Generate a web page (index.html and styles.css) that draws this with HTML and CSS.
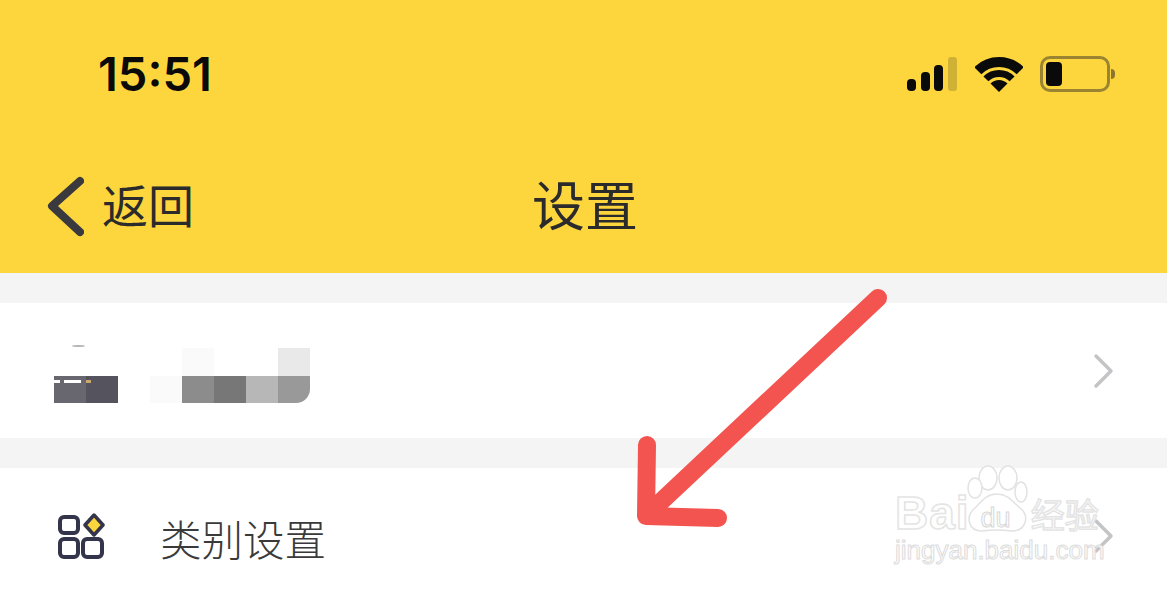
FILE: index.html
```html
<!DOCTYPE html>
<html lang="zh-CN">
<head>
  <meta charset="UTF-8" />
  <meta name="viewport" content="width=device-width, initial-scale=1.0">
  <title>设置</title>
  <link rel="stylesheet" href="styles.css">
</head>
<body>
  <div class="header">
    <div class="status-bar">
      <div class="time">15:51</div>
      <div class="status-icons">
        <svg class="signal" width="52" height="36" viewBox="0 0 52 36">
          <rect x="1" y="23" width="9" height="12" rx="4" fill="#0a0a0a"/>
          <rect x="15" y="16" width="9" height="19" rx="4" fill="#0a0a0a"/>
          <rect x="28" y="9" width="9" height="26" rx="4" fill="#0a0a0a"/>
          <rect x="42" y="1" width="9" height="34" rx="3" fill="#cfb136"/>
        </svg>
        <svg class="wifi" width="48" height="36" viewBox="0 0 48 36">
          <path d="M2.8 14.8 A30 30 0 0 1 45.2 14.8" fill="none" stroke="#0a0a0a" stroke-width="10"/>
          <path d="M10.9 22.9 A18.5 18.5 0 0 1 37.1 22.9" fill="none" stroke="#0a0a0a" stroke-width="7"/>
          <path d="M24 36 L15.5 27.5 A12 12 0 0 1 32.5 27.5 Z" fill="#0a0a0a"/>
        </svg>
        <div class="battery">
          <div class="battery-body"><div class="battery-level"></div></div>
          <div class="battery-cap"></div>
        </div>
      </div>
    </div>
    <div class="nav-bar">
      <a class="back" href="#">
        <svg class="back-icon" width="38" height="62" viewBox="0 0 38 62">
          <path d="M34 6 L6 31 L34 57" fill="none" stroke="#3a3a3e" stroke-width="8" stroke-linecap="round" stroke-linejoin="round"/>
        </svg>
        <span>返回</span>
      </a>
      <div class="title">设置</div>
      <div></div>
    </div>
  </div>

  <div class="content">
    <div class="row account-row">
      <div class="mosaic">
        <div class="sliver"></div>
        <div class="cell"></div><div class="cell"></div><div class="cell"></div><div class="cell"></div>
        <div class="cell c-faint"></div><div class="cell"></div><div class="cell"></div><div class="cell c-light"></div>
        <div class="cell c-dark1"></div><div class="cell c-dark2"></div><div class="cell"></div><div class="cell c-faint"></div>
        <div class="cell c-gray1"></div><div class="cell c-gray2"></div><div class="cell c-gray3"></div><div class="cell c-gray4"></div>
      </div>
      <svg class="chevron" width="22" height="36" viewBox="0 0 22 36">
        <path d="M3 3 L18 18 L3 33" fill="none" stroke="#c4c4c6" stroke-width="3.5" stroke-linecap="round" stroke-linejoin="round"/>
      </svg>
    </div>
    <div class="row category-row">
      <svg class="cat-icon" width="48" height="48" viewBox="0 0 48 48">
        <rect x="3" y="5" width="18" height="16" rx="4" fill="none" stroke="#34344a" stroke-width="4"/>
        <rect x="3" y="27" width="18" height="18" rx="4" fill="none" stroke="#34344a" stroke-width="4"/>
        <rect x="26" y="27" width="19" height="18" rx="4" fill="none" stroke="#34344a" stroke-width="4"/>
        <path d="M37 3 L46 13 L37 23 L28 13 Z" fill="#fdd63d" stroke="#34344a" stroke-width="3.5" stroke-linejoin="round"/>
      </svg>
      <div class="row-label">类别设置</div>
      <svg class="chevron" width="22" height="36" viewBox="0 0 22 36">
        <path d="M3 3 L18 18 L3 33" fill="none" stroke="#c4c4c6" stroke-width="3.5" stroke-linecap="round" stroke-linejoin="round"/>
      </svg>
    </div>
  </div>

  <!-- arrow drawn on top of the screenshot -->
  <svg class="arrow" width="280" height="270" viewBox="0 0 280 270">
    <path d="M258 28 L32 240" fill="none" stroke="#f4544f" stroke-width="18" stroke-linecap="round"/>
    <path d="M27 175 L26 246 L98 248" fill="none" stroke="#f4544f" stroke-width="18" stroke-linecap="round" stroke-linejoin="round"/>
  </svg>

  <div class="watermark">
    <svg class="paw" width="62" height="68" viewBox="0 0 62 68">
      <g fill="#fff" stroke="#e2e2e2" stroke-width="1.5">
        <ellipse cx="22" cy="14" rx="9" ry="12"/>
        <ellipse cx="42" cy="14" rx="9" ry="12"/>
        <ellipse cx="9" cy="24" rx="7" ry="10"/>
        <ellipse cx="55" cy="28" rx="6" ry="10"/>
        <path d="M31 30 C42 30 46 37 54 44 C64 52 60 67 46 67 C38 66 24 66 16 67 C2 67 -1 52 9 44 C16 37 20 30 31 30 Z"/>
      </g>
    </svg>
    <div class="wm-top"><span class="wm-bai">Bai</span><span class="wm-du">du</span><span class="wm-cn">经验</span></div>
    <div class="wm-url">jingyan.baidu.com</div>
  </div>
</body>
</html>
```

FILE: styles.css
```css
html, body {
  margin: 0;
  padding: 0;
  height: 100%;
  overflow: hidden;
  font-family: "Noto Sans CJK SC", "Liberation Sans", sans-serif;
}
body {
  position: relative;
  background-color: #f4f4f4;
}
.header {
  height: 273px;
  background-color: #fdd63d;
  display: flex;
  flex-direction: column;
}
.status-bar {
  display: flex;
  justify-content: space-between;
  align-items: center;
  height: 92px;
  padding: 56px 52px 0 98px;
  box-sizing: border-box;
}
.time {
  font-family: Inter, "Liberation Sans", sans-serif;
  font-weight: 600;
  font-size: 47px;
  line-height: 36px;
  color: #0a0a0a;
}
.status-icons {
  display: flex;
  align-items: center;
  gap: 17px;
}
.battery {
  display: flex;
  align-items: center;
  gap: 1px;
}
.battery-body {
  width: 70px;
  height: 36px;
  box-sizing: border-box;
  border: 3px solid #9a8432;
  border-radius: 10px;
  padding: 3px;
}
.battery-level {
  width: 16px;
  height: 100%;
  background-color: #0a0a0a;
  border-radius: 4px;
}
.battery-cap {
  width: 4px;
  height: 10px;
  background-color: #8a7630;
  border-radius: 0 5px 5px 0;
}
.nav-bar {
  flex: 1;
  display: grid;
  grid-template-columns: 1fr auto 1fr;
  align-items: center;
  padding-top: 40px;
  box-sizing: border-box;
}
.back {
  display: flex;
  align-items: center;
  gap: 18px;
  padding-left: 46px;
  text-decoration: none;
  color: #2b2b2b;
  font-size: 46px;
}
.back-icon {
  margin-top: 6px;
}
.title {
  font-size: 53px;
  color: #2b2b2b;
  padding-left: 3px;
}
.content {
  display: flex;
  flex-direction: column;
  gap: 30px;
  padding-top: 30px;
}
.row {
  background-color: white;
  display: flex;
  align-items: center;
  height: 135px;
  padding: 0 52px 0 54px;
}
.account-row {
  justify-content: space-between;
}
.mosaic {
  position: relative;
  display: grid;
  grid-template-columns: repeat(8, 32px);
  grid-template-rows: 28px 27px;
  margin-top: 10px;
}
.sliver {
  position: absolute;
  left: 18px;
  top: -3px;
  width: 13px;
  height: 2px;
  border-radius: 50%;
  background-color: #b5b5b5;
}
.cell:nth-of-type(n+10) { grid-row: 2; }
.c-faint { background-color: #fafafa; }
.c-light { background-color: #e9e9e9; }
.c-dark1 {
  background:
    linear-gradient(#fff, #fff) no-repeat 0 4px / 6px 3px,
    linear-gradient(#fff, #fff) no-repeat 10px 4px / 17px 3px,
    #68666f;
}
.c-dark2 {
  background:
    linear-gradient(#c9a869, #c9a869) no-repeat 0 4px / 5px 3px,
    #55545e;
}
.c-gray1 { background-color: #8c8c8c; }
.c-gray2 { background-color: #777777; }
.c-gray3 { background-color: #b7b7b7; }
.c-gray4 { background-color: #999999; border-radius: 0 0 14px 0; }
.cat-icon {
  margin-left: 3px;
}
.row-label {
  flex: 1;
  margin-left: 55px;
  padding-top: 4px;
  font-size: 41.5px;
  font-weight: 300;
  color: #3a3a3a;
}
.arrow {
  position: absolute;
  left: 620px;
  top: 270px;
}
.watermark {
  position: absolute;
  left: 895px;
  top: 464px;
  width: 215px;
  color: white;
}
.paw {
  position: absolute;
  left: 71px;
  top: 0;
}
.wm-top {
  position: relative;
  display: flex;
  align-items: center;
  height: 50px;
  margin-top: 24px;
  -webkit-text-stroke: 1.5px #e4e4e4;
}
.wm-bai {
  font-family: "Liberation Sans", sans-serif;
  font-weight: 700;
  font-size: 46px;
  letter-spacing: 1px;
}
.wm-du {
  font-family: "Liberation Sans", sans-serif;
  font-size: 27px;
  margin: 10px 18px 0 11px;
  -webkit-text-stroke: 1px #d8d8d8;
}
.wm-cn {
  font-size: 34px;
  margin-left: 2px;
}
.wm-url {
  position: relative;
  font-family: "Liberation Sans", sans-serif;
  font-size: 26px;
  line-height: 24px;
  white-space: nowrap;
  -webkit-text-stroke: 1px #dcdcdc;
}
```
